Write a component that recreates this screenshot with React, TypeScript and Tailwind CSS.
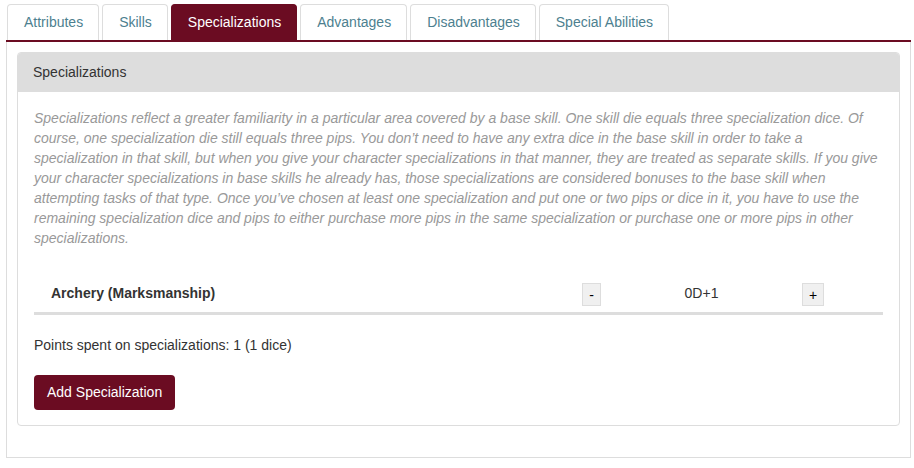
const TABS = [
  "Attributes",
  "Skills",
  "Specializations",
  "Advantages",
  "Disadvantages",
  "Special Abilities",
];

const DESCRIPTION =
  "Specializations reflect a greater familiarity in a particular area covered by a base skill. One skill die equals three specialization dice. Of course, one specialization die still equals three pips. You don\u2019t need to have any extra dice in the base skill in order to take a specialization in that skill, but when you give your character specializations in that manner, they are treated as separate skills. If you give your character specializations in base skills he already has, those specializations are considered bonuses to the base skill when attempting tasks of that type. Once you\u2019ve chosen at least one specialization and put one or two pips or dice in it, you have to use the remaining specialization dice and pips to either purchase more pips in the same specialization or purchase one or more pips in other specializations.";

export default function App() {
  const active = "Specializations";

  return (
    <div
      className="min-h-screen bg-white pt-[4px] pl-[6px] text-[14px] text-[#333]"
      style={{ fontFamily: '"Liberation Sans", Arial, sans-serif' }}
    >
      <div className="w-[905px]">
        <ul className="flex gap-[3px] pl-[1px] border-b-2 border-[#6b0c22]">
          {TABS.map((t) => (
            <li
              key={t}
              className={
                t === active
                  ? "h-[36px] flex items-center pl-[16px] pr-[15px] rounded-t-[4px] border border-b-0 border-[#6b0c22] bg-[#6b0c22] text-white"
                  : "h-[36px] flex items-center pl-[16px] pr-[15px] rounded-t-[4px] border border-b-0 border-[#ddd] bg-white text-[#4d7f8f]"
              }
            >
              {t}
            </li>
          ))}
        </ul>

        <div className="border-x border-b border-[#ddd] px-[10px] pt-[10px] pb-[31px]">
          <div className="border border-[#ddd] rounded-[4px]">
            <div className="h-[39px] flex items-center px-[15px] bg-[#ddd] rounded-t-[3px]">
              Specializations
            </div>
            <div className="px-[16px] pt-[16px] pb-[15px]">
              <p className="italic text-[#999] leading-[20px]">{DESCRIPTION}</p>

              <div className="mt-[27px] flex items-center pt-[8px] pb-[6px] border-b-[3px] border-[#ddd]">
                <div className="w-[548px] pl-[17px] font-bold leading-[20px] -mt-[3px]">
                  Archery (Marksmanship)
                </div>
                <button className="w-[19px] h-[23px] bg-[#f0f0f0] border border-[#ddd] text-[14px] leading-none text-black flex items-center justify-center">
                  -
                </button>
                <div className="w-[201px] text-center leading-[20px] -mt-[3px]">0D+1</div>
                <button className="w-[22px] h-[23px] bg-[#f0f0f0] border border-[#ddd] text-[14px] leading-none text-black flex items-center justify-center">
                  +
                </button>
              </div>

              <p className="mt-[20px] leading-[20px]">
                Points spent on specializations: 1 (1 dice)
              </p>

              <button className="mt-[20px] h-[35px] px-[13px] rounded-[4px] bg-[#6b0c22] text-white text-[14px]">
                Add Specialization
              </button>
            </div>
          </div>
        </div>
      </div>
    </div>
  );
}
